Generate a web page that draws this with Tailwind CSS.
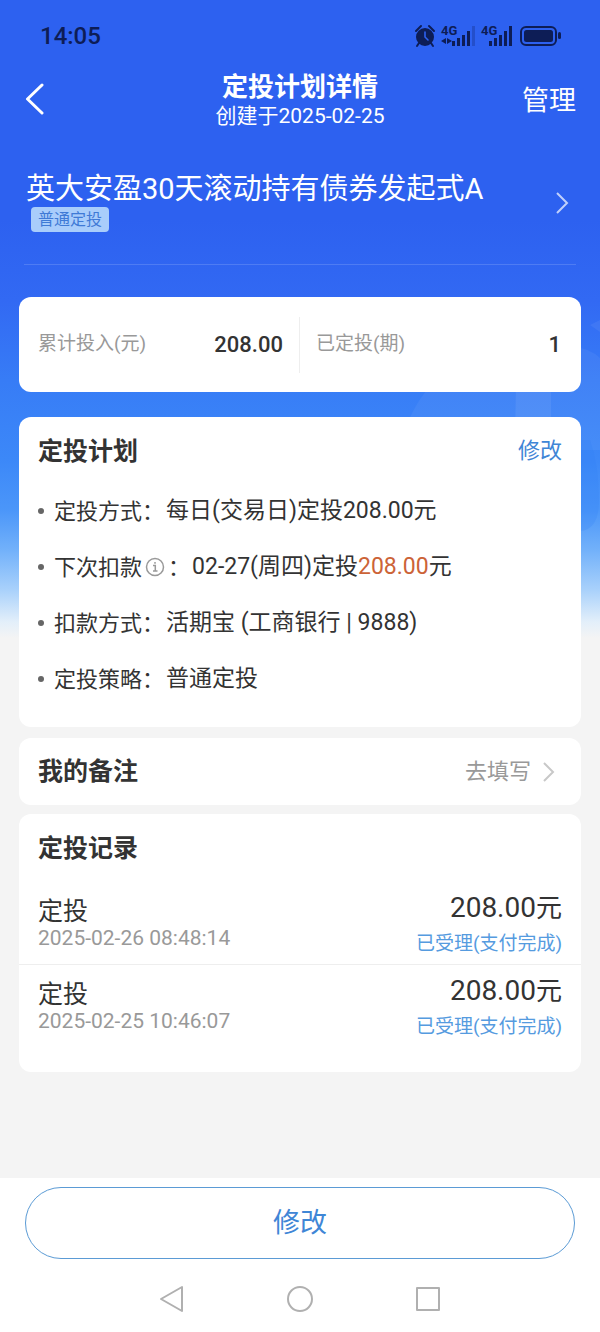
<!DOCTYPE html>
<html lang="zh-CN">
  <head>
    <meta charset="utf-8" />
    <meta name="viewport" content="width=device-width, initial-scale=1" />
    <title>定投计划详情</title>
    <script src="https://cdn.jsdelivr.net/npm/@tailwindcss/browser@4"></script>
  </head>
  <body class="bg-[#f4f4f4] text-[#333] font-[Roboto,'Noto_Sans_CJK_SC',sans-serif]">
    <div id="app" class="relative isolate flex min-h-screen flex-col">
      <!-- 顶部渐变背景 -->
      <div class="absolute inset-x-0 top-0 -z-10 h-[638px] overflow-hidden bg-[linear-gradient(to_bottom,#2d61f0_0px,#2d61f0_220px,#3269f3_300px,#377cf6_380px,#3c88f8_460px,#4b96f9_510px,#72b1fa_550px,#a9d1fb_590px,#e3effa_622px,#f4f4f4_638px)]">
        <svg class="absolute right-0 top-[300px]" width="200" height="240" viewBox="0 0 200 240">
          <path d="M190 25l10-5v12z" fill="#fff" fill-opacity=".06" />
          <path d="M10 117Q28 80 60 60L170 46Q190 48 200 58V150H10z" fill="#fff" fill-opacity=".05" />
          <path d="M116 80h35v60h-36z" fill="#fff" fill-opacity=".07" />
          <path d="M170 140H190Q199 165 199 200Q199 230 180 231H170z" fill="#2f7cf6" fill-opacity=".2" />
        </svg>
      </div>

      <!-- 状态栏 -->
      <div class="flex h-[72px] items-center justify-between pl-10 pr-[38px] text-[#0d1d56]">
        <span class="text-2xl font-medium">14:05</span>
        <svg width="148" height="24" viewBox="0 0 148 24" fill="currentColor">
          <circle cx="11" cy="13" r="9" />
          <path d="M2 7l5-5M20 7l-5-5M5 19l-2 3M17 19l2 3" fill="none" stroke="currentColor" stroke-width="2" stroke-linecap="round" />
          <path d="M11 8v5l3 3" fill="none" stroke="#2d61f0" stroke-width="1.6" stroke-linecap="round" />
          <text x="27" y="11" font-size="13" font-weight="700">4G</text>
          <path d="M32 14v6l-5-3zM33 14v6l5-3z" />
          <path d="M38 17h3v5h-3zM43 14h3v8h-3zM48 11h3v11h-3zM53 7h3v15h-3z" />
          <path d="M58 2h3v20h-3z" opacity=".25" />
          <text x="67" y="11" font-size="13" font-weight="700">4G</text>
          <path d="M75 17h3v5h-3zM80 14h3v8h-3zM85 11h3v11h-3zM90 7h3v15h-3zM95 2h3v20h-3z" />
          <rect x="107" y="3" width="35" height="18" rx="5" fill="none" stroke="currentColor" stroke-width="2" />
          <rect x="110" y="6" width="29" height="12" rx="2.500" />
          <rect x="144" y="8" width="3" height="7" rx="1.500" />
        </svg>
      </div>

      <header class="grid grid-cols-[1fr_auto_1fr] items-center px-6 text-white">
        <button type="button" aria-label="返回" class="justify-self-start pb-1">
          <svg width="20" height="34" viewBox="0 0 20 34" fill="none" stroke="currentColor" stroke-width="3" stroke-linecap="round" stroke-linejoin="round"><path d="M18 3L3.500 17 18 31" /></svg>
        </button>
        <div class="text-center">
          <h1 class="text-[26px] leading-[30px] font-bold">定投计划详情</h1>
          <p class="text-[21px] leading-7">创建于2025-02-25</p>
        </div>
        <button type="button" class="justify-self-end text-[27px] leading-8">管理</button>
      </header>

      <a href="#" class="mx-6 mt-[41px] flex h-[94px] items-start justify-between border-b border-white/15 pl-[2px] pr-[6px] text-white">
        <div>
          <h2 class="text-[29px] leading-9">英大安盈30天滚动持有债券发起式A</h2>
          <span class="ml-[5px] block w-fit rounded bg-[#a9cdfb] px-[7px] text-base leading-[25px] text-[#3f7ad6]">普通定投</span>
        </div>
        <svg class="mt-5" width="16" height="24" viewBox="0 0 16 24" fill="none" stroke="currentColor" stroke-opacity=".7" stroke-width="2"><path d="M3 2l10 10L3 22" /></svg>
      </a>

      <main class="flex-1 px-[19px] pb-5">
        <section class="mt-8 flex h-[95px] items-center rounded-xl bg-white">
          <div class="flex h-14 flex-1 items-center justify-between border-r border-[#eee] pl-[19px] pr-4">
            <span class="text-[19px] text-[#999]">累计投入(元)</span>
            <strong class="text-[22px] font-medium">208.00</strong>
          </div>
          <div class="flex h-14 flex-1 items-center justify-between pl-4 pr-5">
            <span class="text-[19px] text-[#999]">已定投(期)</span>
            <strong class="text-[22px] font-medium">1</strong>
          </div>
        </section>

        <section class="mt-[25px] rounded-xl bg-white px-[19px] pb-5">
          <div class="flex h-[66px] items-center justify-between">
            <h3 class="pt-1 text-[25px] font-bold">定投计划</h3>
            <button type="button" class="text-[22px] text-[#3f86d6]">修改</button>
          </div>
          <dl class="text-[22px]">
            <div class="flex h-14 items-center gap-[2px]">
              <dt class="flex items-center"><i class="mr-[10px] size-[6px] rounded-full bg-[#666]"></i>定投方式：</dt>
              <dd class="text-[23px]">每日(交易日)定投208.00元</dd>
            </div>
            <div class="flex h-14 items-center gap-[2px]">
              <dt class="flex items-center"><i class="mr-[10px] size-[6px] rounded-full bg-[#666]"></i>下次扣款
                <svg class="mx-[3px]" width="20" height="20" viewBox="0 0 20 20" fill="none" stroke="#999" stroke-width="1.500"><circle cx="10" cy="10" r="8.500" /><path d="M8 8.500h2.300V14M8 14h4.500M10 5v1.800" /></svg>：</dt>
              <dd class="text-[23px]">02-27(周四)定投<span class="text-[#cc6337]">208.00</span>元</dd>
            </div>
            <div class="flex h-14 items-center gap-[2px]">
              <dt class="flex items-center"><i class="mr-[10px] size-[6px] rounded-full bg-[#666]"></i>扣款方式：</dt>
              <dd class="text-[23px]">活期宝 (工商银行 | 9888)</dd>
            </div>
            <div class="flex h-14 items-center gap-[2px]">
              <dt class="flex items-center"><i class="mr-[10px] size-[6px] rounded-full bg-[#666]"></i>定投策略：</dt>
              <dd class="text-[23px]">普通定投</dd>
            </div>
          </dl>
        </section>

        <section class="mt-[11px] flex h-[67px] items-center justify-between rounded-xl bg-white pl-[19px] pr-6">
          <h3 class="text-[25px] font-bold">我的备注</h3>
          <a href="#" class="flex items-center gap-3 text-[22px] text-[#999]">
            去填写
            <svg width="14" height="20" viewBox="0 0 14 20" fill="none" stroke="#c8c8c8" stroke-width="2"><path d="M1 1l9 9-9 9" /></svg>
          </a>
        </section>

        <section class="mt-[9px] rounded-xl bg-white pb-6">
          <h3 class="px-[19px] pt-[2px] text-[25px] leading-[66px] font-bold">定投记录</h3>
          <ul>
            <li class="flex h-[83px] justify-between border-b border-[#eee] px-[19px] pt-[14px]">
              <div>
                <p class="text-[25px] leading-8">定投</p>
                <time class="block text-[21px] leading-5 text-[#999]">2025-02-26 08:48:14</time>
              </div>
              <div class="text-right">
                <p class="text-[26px] leading-6"><span class="text-[28px]">208.00</span>元</p>
                <p class="mt-3 text-[19px] leading-6 text-[#559bdf]">已受理(支付完成)</p>
              </div>
            </li>
            <li class="flex h-[83px] justify-between px-[19px] pt-[14px]">
              <div>
                <p class="text-[25px] leading-8">定投</p>
                <time class="block text-[21px] leading-5 text-[#999]">2025-02-25 10:46:07</time>
              </div>
              <div class="text-right">
                <p class="text-[26px] leading-6"><span class="text-[28px]">208.00</span>元</p>
                <p class="mt-3 text-[19px] leading-6 text-[#559bdf]">已受理(支付完成)</p>
              </div>
            </li>
          </ul>
        </section>
      </main>

      <footer class="bg-white px-[25px] pt-[9px]">
        <button type="button" class="block h-[72px] w-full rounded-full border border-[#5b9bd5] text-[27px] text-[#3f86d6]">修改</button>
        <!-- 系统导航键 -->
        <div class="flex h-[73px] items-center justify-center gap-[100px] pt-[7px] text-[#b0b0b0]">
          <svg width="28" height="28" viewBox="0 0 28 28" fill="none" stroke="currentColor" stroke-width="2" stroke-linejoin="round"><path d="M24 2v24L3 14z" /></svg>
          <svg width="28" height="28" viewBox="0 0 28 28" fill="none" stroke="currentColor" stroke-width="2"><circle cx="14" cy="14" r="12" /></svg>
          <svg width="28" height="28" viewBox="0 0 28 28" fill="none" stroke="currentColor" stroke-width="2" stroke-linejoin="round"><path d="M3 3h22v22H3z" /></svg>
        </div>
      </footer>
    </div>
  </body>
</html>
